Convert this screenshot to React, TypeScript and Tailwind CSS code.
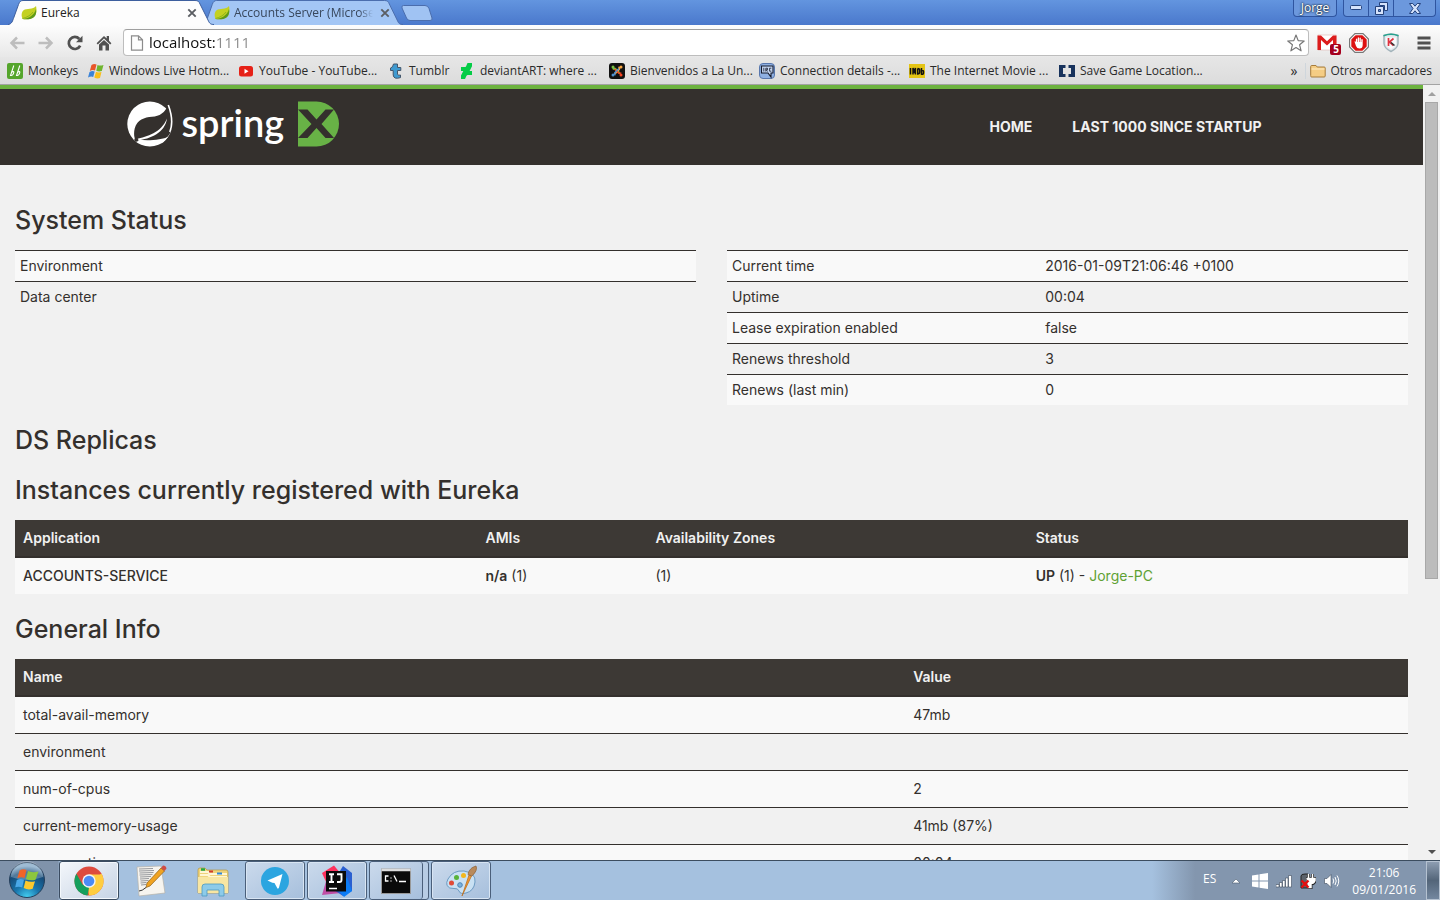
import { useState, type ReactNode } from "react";

const uiFont = "font-['Open_Sans','Noto_Sans',sans-serif]";

function Leaf() {
  return (
    <svg viewBox="0 0 16 16" className="size-4 shrink-0" aria-hidden="true">
      <path d="M15 1c.9 4.200.7 8.600-2.200 11C9.800 14.600 5 14.600 1.600 14 .2 11 .3 7.200 2.600 5.300 5.700 2.800 12 5 15 1z" fill="#c3d122" />
      <path d="M15 4c.6 3.500 0 6.400-2.200 8.200C9.800 14.600 5 14.600 1.600 14 7 13.500 13 11 15 4z" fill="#5f9a1c" />
      <path d="M1.500 13.500C6 12.500 10 10 12 7" stroke="#8fb51c" fill="none" />
    </svg>
  );
}

function TabShape({ fill, stroke }: { fill: string; stroke: string }) {
  return (
    <svg viewBox="0 0 206 25" preserveAspectRatio="none" className="absolute inset-0 size-full" aria-hidden="true">
      <path d="M0 25C4 24 4.500 21 6 17L10.500 4.500C11.500 1.500 13 .5 15 .5H187C190 .5 191 1.500 192 4L200 20C201.500 23.500 202.500 24.500 206 25z" fill={fill} />
      <path d="M0 24.500C4 24 4.500 21 6 17L10.500 4.500C11.500 1.500 13 .5 15 .5H187C190 .5 191 1.500 192 4L200 20C201.500 23.500 202.500 24.500 206 24.500" fill="none" stroke={stroke} />
    </svg>
  );
}

function CloseX() {
  return (
    <svg viewBox="0 0 10 10" className="size-[10px]" aria-hidden="true">
      <path d="M1.300 1.300l7.400 7.400M8.700 1.300L1.300 8.700" stroke="#5b5e63" strokeWidth="1.900" />
    </svg>
  );
}

function TabStrip() {
  return (
    <div className="flex h-[25px] bg-linear-to-b from-[#6395df] to-[#4a78cc] pl-2">
      <div className="relative z-10 flex w-[206px] items-center pr-[17px] pl-[13px]">
        <TabShape fill="#fdfdfd" stroke="#3d5f9e" />
        <button className="relative flex min-w-0 flex-1 items-center gap-1 text-xs text-[#222]">
          <Leaf />
          <span>Eureka</span>
        </button>
        <button aria-label="Close tab" className="relative"><CloseX /></button>
      </div>
      <div className="relative -ml-3 flex w-[201px] items-center pr-[13px] pl-3">
        <TabShape fill="#a3c6f5" stroke="#4a6dad" />
        <button className="relative flex min-w-0 flex-1 items-center gap-1 text-xs text-[#38475c]">
          <Leaf />
          <span className="w-[139px] overflow-hidden mask-r-from-90% text-left whitespace-nowrap">Accounts Server (Microservices)</span>
        </button>
        <button aria-label="Close tab" className="relative"><CloseX /></button>
      </div>
      <button aria-label="New tab" className="mt-[5px] -ml-[2px] h-4">
        <svg viewBox="0 0 32 16" className="h-4 w-8" aria-hidden="true">
          <path d="M2.500.5H24q3 0 4 3l3 9.500q.8 2.500-2 2.500H9q-2.500 0-3.500-2.500L1 3Q.3.500 2.500.5z" fill="#a0c3f3" stroke="#4a6dad" />
        </svg>
      </button>
      <div className="ml-auto flex h-[17px] text-white">
        <button className="mr-[6px] w-11 rounded-b border border-t-0 border-[#2f55a0] bg-[#6c98dd] text-xs leading-4 [text-shadow:0_0_2px_#123,0_0_2px_#123]">Jorge</button>
        <div className="mr-1 flex rounded-b border border-t-0 border-[#2f55a0] bg-[#6c98dd]">
          <button aria-label="Minimize" className="flex w-[25px] items-center justify-center border-r border-[#2f55a0]">
            <svg viewBox="0 0 12 6" className="h-[6px] w-3"><rect x=".5" y=".5" width="11" height="4" rx="1" fill="#d6e3fb" stroke="#24427c" /></svg>
          </button>
          <button aria-label="Restore" className="flex w-[25px] items-center justify-center border-r border-[#2f55a0]">
            <svg viewBox="0 0 13 13" className="size-[13px]">
              <path d="M4.500.5h8v8h-3v-5h-5z" fill="#d6e3fb" stroke="#24427c" />
              <path fillRule="evenodd" d="M.5 4.500h8v8h-8zM3.500 7.500h2v2h-2z" fill="#d6e3fb" stroke="#24427c" />
            </svg>
          </button>
          <button aria-label="Close" className="flex w-[41px] items-center justify-center">
            <svg viewBox="0 0 12 11" className="h-[11px] w-3"><path d="M.5.5h3.300L6 3.200 8.200.5h3.300L8 5.500l3.500 5H8.200L6 7.800l-2.200 2.700H.5L4 5.500z" fill="#d6e3fb" stroke="#24427c" /></svg>
          </button>
        </div>
      </div>
    </div>
  );
}

function Arrow({ flip = false }: { flip?: boolean }) {
  return (
    <svg viewBox="0 0 16 14" className={flip ? "h-[14px] w-4 -scale-x-100" : "h-[14px] w-4"} aria-hidden="true">
      <path d="M8 1.500L2.500 7 8 12.500M3 7h12.500" fill="none" stroke="#bdbdbd" strokeWidth="2.500" />
    </svg>
  );
}

function Toolbar() {
  const [url, setUrl] = useState("localhost:1111");
  return (
    <div className="flex h-8 items-center bg-linear-to-b from-[#fdfdfd] to-[#e8e8e8] px-[9px] pt-[3px]">
      <div className="flex w-[114px] items-center gap-[13px]">
        <button aria-label="Back"><Arrow /></button>
        <button aria-label="Forward"><Arrow flip /></button>
        <button aria-label="Reload">
          <svg viewBox="0 0 16 16" className="size-4" aria-hidden="true">
            <path d="M13.200 10.600A6 6 0 1 1 12.300 4" fill="none" stroke="#505050" strokeWidth="2.700" />
            <path d="M15.500.8v6.400H9z" fill="#505050" />
          </svg>
        </button>
        <button aria-label="Home">
          <svg viewBox="0 0 16 16" className="size-4" aria-hidden="true">
            <path d="M8 1L.6 8.200l1.200 1.200L8 3.600l6.200 5.800 1.200-1.200L13 5.800V1h-2.300v2.600zM3 9.500V15.500h3.500V10.500h3v5H13V9.500L8 4.900z" fill="#505050" />
          </svg>
        </button>
      </div>
      <div className="flex h-[27px] min-w-0 flex-1 items-center rounded-sm border border-[#bdbdbd] border-t-[#9f9f9f] bg-white pr-[3px] pl-[6px]">
        <svg viewBox="0 0 14 16" className="h-4 w-[14px]" aria-hidden="true">
          <path d="M1.500.8h7l4 4v10.400h-11zM8.500.8v4h4" fill="#fdfdfd" stroke="#8c8c8c" strokeWidth="1.200" />
        </svg>
        <input
          aria-label="Address"
          value={url}
          onChange={(e) => setUrl(e.target.value)}
          className="ml-[5px] min-w-0 flex-1 bg-[linear-gradient(to_right,#111_66px,#8a8a8a_66px)] bg-clip-text text-[15px] text-transparent caret-black outline-none"
        />
        <button aria-label="Bookmark this page">
          <svg viewBox="0 0 18 18" className="size-[18px]" aria-hidden="true">
            <path d="M9 1l2.200 5.600 6 .4-4.600 3.800 1.500 6L9 13.500l-5.100 3.300 1.500-6L.8 7l6-.4z" fill="#fff" stroke="#777" strokeWidth="1.200" strokeLinejoin="round" />
          </svg>
        </button>
      </div>
      <div className="flex w-[122px] items-center justify-end">
        <button aria-label="Gmail" className="relative mr-2">
          <svg viewBox="0 0 24 24" className="size-6" aria-hidden="true">
            <rect x="1" y="4" width="18" height="15" fill="#fff" stroke="#d9a6a3" strokeWidth=".5" />
            <path d="M.5 19V4.500H4l6 5.800 6-5.800h3.500V19H16V9l-6 5.500L4 9v10z" fill="#dc1c1c" />
            <rect x="13" y="13" width="11" height="11" rx="2" fill="#a5001e" />
          </svg>
          <span className="absolute right-[2px] bottom-[-1px] text-[10px] leading-[13px] font-bold text-white">5</span>
        </button>
        <button aria-label="AdBlock" className="mr-3">
          <svg viewBox="0 0 20 20" className="size-5" aria-hidden="true">
            <path d="M6 .6h8L19.400 6v8L14 19.400H6L.6 14V6z" fill="#fff" stroke="#777" strokeWidth="1.200" />
            <path d="M6.600 2.300h6.800l4.300 4.300v6.800l-4.300 4.300H6.600l-4.300-4.300V6.600z" fill="#dd1111" />
            <path d="M5.500 8.500q.8-.6 1.400.4V6q.7-1 1.300 0v3h.5V4.700q.7-1 1.300 0V9h.5V5q.7-.9 1.300 0v4h.5V6.500q.8-.8 1.400 0V12q0 3.500-3.200 3.500-2.600 0-3.500-2.500z" fill="#fff" />
          </svg>
        </button>
        <button aria-label="Kaspersky" className="mr-4">
          <svg viewBox="0 0 20 20" className="size-5" aria-hidden="true">
            <path d="M3 2.500q7-3 14 0v8q-.5 5-7 8-6.500-3-7-8z" fill="#e3ebee" stroke="#a3b4bb" strokeWidth="1.500" />
            <path d="M5 4.500h10v6q-.5 3-5 5.500-4.500-2.500-5-5.500z" fill="#f8fafb" />
            <path d="M2.500 2.700q7.500-3 15 0" stroke="#25a48e" strokeWidth="1.500" fill="none" />
            <path d="M7.500 5v8M12.500 5.500l-4 3.500 4 3.500" stroke="#df3340" strokeWidth="1.700" fill="none" />
            <path d="M10 9.500l3.500 3" stroke="#333" strokeWidth="1.500" />
          </svg>
        </button>
        <button aria-label="Menu">
          <svg viewBox="0 0 14 14" className="size-[14px]" aria-hidden="true"><path d="M.5 2h13M.5 7h13M.5 12h13" stroke="#505050" strokeWidth="3" /></svg>
        </button>
      </div>
    </div>
  );
}

const bookmarks: { label: string; width: string; icon: ReactNode }[] = [
  { label: "Monkeys", width: "w-[81px]", icon: (<>
    <rect width="16" height="16" rx="2" fill="#55a52c" />
    <path d="M6.800 2.500L3.500 12.500Q6 13 6.800 9.500 7 8 4.800 9M12.800 2.500L9.500 12.500Q12 13 12.800 9.500 13 8 10.800 9" fill="none" stroke="#fff" strokeWidth="1.100" />
  </>) },
  { label: "Windows Live Hotm...", width: "w-[150px]", icon: (<>
    <path d="M3.500 2Q6 .5 8.500 1.500L7 7.500Q4.500 6.500 1.800 8z" fill="#e8562a" />
    <path d="M9.500 2q2.500 1.200 6 0l-1.700 6q-3 1-5.500-.2z" fill="#6fb52e" />
    <path d="M1.500 9q2.500-1.500 5.200-.5L5.200 14Q3 13 0 14.500z" fill="#3b83d8" />
    <path d="M8 8.800q2.500 1.200 5.500.2L12 15q-3 1-5.700-.6z" fill="#f9bf1c" />
  </>) },
  { label: "YouTube - YouTube...", width: "w-[150px]", icon: (<>
    <rect x="1" y="3" width="14" height="10.500" rx="2.500" fill="#e62117" />
    <path d="M6.500 5.800v5l4-2.500z" fill="#fff" />
  </>) },
  { label: "Tumblr", width: "w-[71px]", icon: (
    <path d="M5.500 1h4v3.500h3.300v3H9.500v3.500q.3 2 3 1v2.600q-6.800 2.200-7.300-2.600V7.500H2.500V5Q5 4.500 5.500 1z" fill="#3f9ad0" stroke="#44566b" />
  ) },
  { label: "deviantART: where ...", width: "w-[150px]", icon: (
    <path d="M8.500 0H13v3.300L10.600 8H13v4H8.500l-1 .8L6 16H2v-3.500L4.300 8H2V4h4.500l.6-.7z" fill="#05cc47" />
  ) },
  { label: "Bienvenidos a La Un...", width: "w-[150px]", icon: (<>
    <rect width="16" height="16" rx="3" fill="#111" />
    <path d="M4 6.500Q5 4.500 7 6.500L10.500 10" stroke="#7ac143" strokeWidth="1.800" fill="none" />
    <path d="M9.500 4Q11.500 5 9.500 7L6 10.500" stroke="#f9a541" strokeWidth="1.800" fill="none" />
    <path d="M12 9.500Q11 11.500 9 9.500L5.500 6" stroke="#f44321" strokeWidth="1.500" fill="none" />
    <path d="M6.500 12Q4.500 11 6.500 9L10 5.500" stroke="#5091cd" strokeWidth="1.500" fill="none" />
    <circle cx="4" cy="4" r="1.500" fill="#7ac143" />
    <circle cx="12" cy="4" r="1.500" fill="#f9a541" />
    <circle cx="12" cy="12" r="1.500" fill="#f44321" />
    <circle cx="4" cy="12" r="1.500" fill="#5091cd" />
  </>) },
  { label: "Connection details -...", width: "w-[150px]", icon: (<>
    <rect x=".5" y=".5" width="15" height="15" rx="3.500" fill="#8fb0e2" stroke="#5877ad" />
    <path d="M2.500 3h11.500v7H12v4L9 10H2.500z" fill="#c5d7f3" stroke="#151a2c" strokeWidth="1.100" />
    <path d="M4.800 4.800v3.700M6.800 8.500V5.200h1.700v1.600H7.200l1.300 1.700M12.300 5.200h-1.700v3h1.700" stroke="#151a2c" fill="none" strokeWidth=".8" />
  </>) },
  { label: "The Internet Movie ...", width: "w-[150px]", icon: (<>
    <rect y="1" width="16" height="14" fill="#e4c414" />
    <path d="M1.500 5v6.500M4 11.500V5l1.200 3.500L6.400 5v6.500M8.700 5.500v5.500q2 0 2-2V7.500q0-2-2-2M12.500 5v6.200q2 .3 2-1.200V8.500q0-1.200-2-1" stroke="#111" fill="none" strokeWidth="1.500" />
  </>) },
  { label: "Save Game Location...", width: "w-[150px]", icon: (
    <path d="M0 2h6.500v3H4v6h2.500v3H0zM16 2H9.500v3H12v6H9.500v3H16z" fill="#17325c" />
  ) },
];

function Bookmarks() {
  return (
    <nav aria-label="Bookmarks" className="flex h-7 items-center border-b border-[#a3a3a3] bg-linear-to-b from-[#e6e6e6] to-[#dcdcdc] pr-2 pl-[7px] text-xs text-[#2a2a2a]">
      {bookmarks.map((b) => (
        <a key={b.label} href="#" className={`flex shrink-0 items-center gap-[5px] whitespace-nowrap ${b.width}`}>
          <svg viewBox="0 0 16 16" className="size-4 shrink-0" aria-hidden="true">{b.icon}</svg>
          {b.label}
        </a>
      ))}
      <button aria-label="More bookmarks" className="mr-2 ml-auto text-sm leading-4">»</button>
      <a href="#" className="flex items-center gap-1 border-l border-[#cfd6dc] pl-1 whitespace-nowrap">
        <svg viewBox="0 0 16 16" className="size-4" aria-hidden="true">
          <path d="M.7 12.500V3.500q0-1 1-1H6l1.200 1.500h7q1 0 1 1v8q0 1-1 1H1.700q-1 0-1-1z" fill="#f5cd84" stroke="#a67c3c" />
          <path d="M1.500 6h13" stroke="#fdecc6" />
        </svg>
        Otros marcadores
      </a>
    </nav>
  );
}

function SpringLogo() {
  return (
    <a href="#" className="flex items-center text-white" aria-label="Spring">
      <svg viewBox="0 0 46 46" className="size-[46px]" aria-hidden="true">
        <circle cx="22.800" cy="23" r="22.500" fill="#fff" />
        <path d="M41.500 2.500C45.500 13 47.500 23 43.500 31.500 40 38.500 34 40.500 27 40.300L9.500 39.500C7 38 6.500 32.500 7.700 27.500 10 18.500 17.500 16.500 25 15.800 32.500 15 38 12.500 41.500 2.500z" fill="#34302d" />
        <path d="M41.300 4C45 14 46 23 42.800 31" fill="none" stroke="#fff" strokeWidth="1.600" />
        <path d="M9.500 38C20 35.500 34 32 40 17.500 38 31.500 24 38 9.500 39.500z" fill="#fff" />
        <path d="M11 38.800C22 40 35 39 41.500 35.500L36 41.500H14z" fill="#fff" />
        <circle cx="9.300" cy="38.800" r="2" fill="#34302d" />
      </svg>
      <span className="w-[125px] pb-1 pl-[9px] font-['Lato',sans-serif] text-[38px] leading-[42px] font-semibold">spring</span>
      <svg viewBox="0 0 42 46" className="h-[46px] w-[42px]" aria-hidden="true">
        <path d="M0 .5h18.500a22.500 22.500 0 0 1 0 45H0z" fill="#68b246" />
        <path d="M0 8.500h9.500l9 10 9-10H36L23.500 23 36 37H27.500l-9-10-9 10H0L13.500 23z" fill="#34302d" />
      </svg>
    </a>
  );
}

function Heading({ children, className = "mt-[22px]" }: { children: ReactNode; className?: string }) {
  return <h1 className={`mb-[17px] font-['Inter',sans-serif] text-[25px] leading-[26px] font-medium text-[#34302d] ${className}`}>{children}</h1>;
}

function StatusTable({ rows }: { rows: [string, string][] }) {
  return (
    <table className="w-full table-fixed border-separate border-spacing-0 self-start">
      <tbody>
        {rows.map(([name, value]) => (
          <tr key={name} className="h-[31px] odd:bg-[#f9f9f9]">
            <th scope="row" className="w-[46%] border-t border-[#34302d] px-[5px] text-left font-normal">{name}</th>
            <td className="border-t border-[#34302d] px-[5px]">{value}</td>
          </tr>
        ))}
      </tbody>
    </table>
  );
}

const instanceColumns = [
  ["Application", "w-[33.200%]"],
  ["AMIs", "w-[12.200%]"],
  ["Availability Zones", "w-[27.300%]"],
  ["Status", ""],
];

const generalInfo = [
  ["total-avail-memory", "47mb"],
  ["environment", ""],
  ["num-of-cpus", "2"],
  ["current-memory-usage", "41mb (87%)"],
  ["server-uptime", "00:04"],
];

function EurekaPage() {
  return (
    <div className="min-w-0 flex-1 overflow-hidden bg-[#f1f1f1] font-['Inter',sans-serif] text-sm text-[#34302d]">
      <header className="h-20 border-t-4 border-[#6db33f] bg-[#34302d]">
        <div className="mx-auto flex max-w-[1170px] items-center justify-between pt-3 pr-[35px]">
          <SpringLogo />
          <nav className="flex gap-10 pt-[6px] font-bold text-[#f1f1f1] uppercase">
            <a href="#">Home</a>
            <a href="#">Last 1000 since startup</a>
          </nav>
        </div>
      </header>
      <main className="px-[15px] pt-5">
        <Heading>System Status</Heading>
        <div className="grid grid-cols-2 gap-[31px]">
          <StatusTable rows={[["Environment", ""], ["Data center", ""]]} />
          <StatusTable
            rows={[
              ["Current time", "2016-01-09T21:06:46 +0100"],
              ["Uptime", "00:04"],
              ["Lease expiration enabled", "false"],
              ["Renews threshold", "3"],
              ["Renews (last min)", "0"],
            ]}
          />
        </div>
        <Heading>DS Replicas</Heading>
        <Heading className="mt-6">Instances currently registered with Eureka</Heading>
        <table className="w-full table-fixed border-separate border-spacing-0">
          <thead>
            <tr className="h-[38px] bg-[#3d3935] text-[#f1f1f1]">
              {instanceColumns.map(([name, width]) => (
                <th key={name} scope="col" className={`border-b-2 border-[#34302d] px-2 text-left font-semibold ${width}`}>{name}</th>
              ))}
            </tr>
          </thead>
          <tbody>
            <tr className="h-9 bg-[#f9f9f9]">
              <td className="px-2 font-medium">ACCOUNTS-SERVICE</td>
              <td className="px-2"><b className="font-semibold">n/a</b> (1)</td>
              <td className="px-2">(1)</td>
              <td className="px-2"><b className="font-semibold">UP</b> (1) - <a href="#" className="text-[#5fa134]">Jorge-PC</a></td>
            </tr>
          </tbody>
        </table>
        <Heading>General Info</Heading>
        <table className="w-full table-fixed border-separate border-spacing-0">
          <thead>
            <tr className="h-[38px] bg-[#3d3935] text-[#f1f1f1]">
              <th scope="col" className="w-[63.900%] border-b-2 border-[#34302d] px-2 text-left font-semibold">Name</th>
              <th scope="col" className="border-b-2 border-[#34302d] px-2 text-left font-semibold">Value</th>
            </tr>
          </thead>
          <tbody>
            {generalInfo.map(([name, value]) => (
              <tr key={name} className="h-[37px] odd:bg-[#f9f9f9]">
                <td className="border-b border-[#34302d] px-2">{name}</td>
                <td className="border-b border-[#34302d] px-2">{value}</td>
              </tr>
            ))}
          </tbody>
        </table>
      </main>
    </div>
  );
}

function ScrollBar() {
  return (
    <div className="flex w-[17px] shrink-0 flex-col bg-[#f1f1f1]">
      <button aria-label="Scroll up" className="flex h-[17px] items-center justify-center">
        <svg viewBox="0 0 8 4" className="h-1 w-2"><path d="M0 4l4-4 4 4z" fill="#a0a0a0" /></svg>
      </button>
      <div className="min-h-0 flex-1 px-[2px]">
        <div className="h-[64.400%] border border-[#a8a8a8] bg-[#bcbcbc]" />
      </div>
      <button aria-label="Scroll down" className="flex h-[17px] items-center justify-center">
        <svg viewBox="0 0 8 4" className="h-1 w-2"><path d="M0 0l4 4 4-4z" fill="#505050" /></svg>
      </button>
    </div>
  );
}

function TaskButton({ label, framed = false, active = false, children }: { label: string; framed?: boolean; active?: boolean; children: ReactNode }) {
  const frame = active
    ? "border-[#3b4c61] bg-linear-to-br from-[#f4f7fb] to-[#c6d3e4] shadow-[inset_0_0_0_1px_#f4f8fc]"
    : framed
      ? "border-[#4a5f7a] bg-linear-to-br from-[#cbdaec] to-[#a6bfdc] shadow-[inset_0_0_0_1px_#d8e5f3]"
      : "border-transparent";
  return (
    <button aria-label={label} className={`flex h-[39px] w-[60px] items-center justify-center rounded-[3px] border ${frame}`}>
      <svg viewBox="0 0 32 32" className="size-8" aria-hidden="true">{children}</svg>
    </button>
  );
}

function Taskbar() {
  return (
    <footer className="flex h-10 shrink-0 items-start border-t border-[#3c4d5f] bg-[linear-gradient(to_right,#8093ab_0,#8093ab_58px,#a5c1df_60px,#a5c1df_80%,#8396ae_83%)]">
      <button aria-label="Start" className="mr-[13px] ml-2">
        <svg viewBox="0 0 38 38" className="size-[38px]" aria-hidden="true">
          <defs>
            <radialGradient id="orb" cx=".5" cy="1" r=".9">
              <stop offset="0" stopColor="#45d2f4" />
              <stop offset=".4" stopColor="#1976ad" />
              <stop offset=".8" stopColor="#174b78" />
              <stop offset="1" stopColor="#7fa6c6" />
            </radialGradient>
          </defs>
          <circle cx="19" cy="19" r="17.500" fill="url(#orb)" stroke="#253f5b" />
          <path d="M3 16a16 16 0 0 1 32 0Q19 22 3 16z" fill="#fff" opacity=".25" />
          <path d="M11.500 9.500q3.500-2 7-.5l-2 8q-3.500-1.500-7.200.2z" fill="#f06428" />
          <path d="M20 10q4 2 10.500.5l-3 8.200q-5 1.500-9.500-.7z" fill="#8cc63e" />
          <path d="M8.800 19q3.700-1.700 7.200-.2l-1.800 7.700q-3.500-1.500-7-.2z" fill="#4aa8e8" />
          <path d="M17.500 19.500q4.500 2 9.500.7l-2.300 7.600q-4.500 1.700-9-.7z" fill="#fdc92e" />
        </svg>
      </button>
      <div className="flex gap-[2px]">
        <TaskButton label="Google Chrome" active>
          <circle cx="16" cy="16" r="14.500" fill="#dd4b3e" />
          <path d="M16 16L28.600 8.700A14.500 14.500 0 0 1 16 30.500l-1-7z" fill="#ffcd40" />
          <path d="M3.400 8.700L9.500 19.500 16 22.500v.3L14.500 30.500A14.500 14.500 0 0 1 3.400 8.700z" fill="#159f5c" />
          <path d="M16 9.500H29l-2 6-5.500 2.500z" fill="#ffcd40" />
          <circle cx="16" cy="16" r="6.700" fill="#f4f4f4" />
          <circle cx="16" cy="16" r="5.300" fill="#4c8bf5" />
        </TaskButton>
        <TaskButton label="Text editor">
          <path d="M2 2l24-1 4 27-26 3z" fill="#f6f4ef" stroke="#b6b1a8" strokeWidth=".7" />
          <path d="M4 4l14-.5M4 6l15-.5M4.500 8l14-.5M4.500 10l13-.5M5 12l11-.5M5 14l9-.5M5.500 16l8-.5M5.500 18l6-.5M6 20l5-.5" stroke="#96989c" />
          <path d="M26 3l3.500 3L15 21l-4 1.500L12 18z" fill="#f0a322" stroke="#8e5f17" strokeWidth=".7" />
          <path d="M26 3l2-2.500q3 0 3.500 3L29.500 6z" fill="#cf4d45" />
          <path d="M11 22.500Q7 26 4 26" stroke="#333" fill="none" />
        </TaskButton>
        <TaskButton label="File explorer">
          <path d="M1 28V5q0-2 2-2h5l2 2h19q2 0 2 2v21z" fill="#efd47c" stroke="#b9983f" strokeWidth=".7" />
          <path d="M3 7h8l2 2h17M3 10h8l2 2h17" stroke="#fff6d4" strokeWidth="2" fill="none" />
          <path d="M4 4.500h4" stroke="#25a744" strokeWidth="2.500" />
          <path d="M12 6.500h4" stroke="#d3392c" strokeWidth="2" />
          <path d="M20 8.500h5" stroke="#2f87d6" strokeWidth="2" />
          <path d="M1 12h30v16H1z" fill="#f8e6a2" />
          <path d="M5 31V22q0-3 3-3h16q3 0 3 3v9h-5v-6H10v6z" fill="#8dcbe9" stroke="#4b99c0" strokeWidth=".8" />
        </TaskButton>
        <TaskButton label="Telegram" framed>
          <circle cx="16" cy="16" r="14" fill="#2ca5e0" />
          <path d="M23.500 9L8.500 15.500l4.800 2.200L15.500 18l.5 1 2.500 4.500q1 .5 1.500-1z" fill="#fff" />
        </TaskButton>
        <TaskButton label="IntelliJ IDEA" framed>
          <path d="M1 8L13 .5l9 11-14 12z" fill="#fe315d" />
          <path d="M1 30L8 6l12 22z" fill="#c04ea5" />
          <path d="M17 9L22 1l9 7v18l-9 5-9-6z" fill="#2a5fd0" />
          <path d="M26 12l5 14-8 6-5-6z" fill="#0c7cf5" />
          <path d="M5 6h20v20.500H5z" fill="#0a0a0a" />
          <path d="M8 9.300h5M10.500 9v8M8 17h5M16 9.300h4.500V15q0 2-2 2H16" stroke="#fff" strokeWidth="1.900" fill="none" />
          <path d="M8 23.500h8" stroke="#fff" strokeWidth="1.500" />
        </TaskButton>
        <div className="w-[60px] rounded-[3px] border border-[#4a5f7a] bg-[#b7cce4] pr-[5px]">
          <button aria-label="Command prompt" className="flex h-[37px] w-full items-center justify-center rounded-[3px] border-r border-[#4a5f7a] bg-linear-to-br from-[#cbdaec] to-[#a6bfdc]">
            <svg viewBox="0 0 32 32" className="size-8" aria-hidden="true">
              <rect x="1.500" y="4" width="29" height="24.500" fill="#0a0a0a" stroke="#989898" />
              <path d="M1.500 5h29" stroke="#dcdcdc" strokeWidth="2.500" />
              <path d="M8.500 11H5.500v5h3M11 12.500v1M11 15.500v1M14 10.500l3 6M19 16.500h7" stroke="#fff" strokeWidth="1.300" fill="none" />
            </svg>
          </button>
        </div>
        <TaskButton label="Paint" framed>
          <path d="M3 14Q8 5 19 6q12 2 11 11-1 9-9 11-6 1.500-7-2-1-3-5-2.500-5 .5-7-3-1-3 1-6.500z" fill="#c9e1f3" stroke="#6b9ac2" />
          <circle cx="6.500" cy="18" r="2.500" fill="#e04a37" />
          <circle cx="11.500" cy="12.500" r="2.500" fill="#58b33a" />
          <circle cx="18.500" cy="10.500" r="2.500" fill="#f2b71e" />
          <circle cx="15" cy="20" r="2.300" fill="#7db3dd" stroke="#4a84b8" />
          <path d="M17 31l7-21 2.500 1z" fill="#f0962e" stroke="#b86a1a" strokeWidth=".7" />
          <path d="M23 9.500Q24 3 31 1q2 4-4 10z" fill="#b98a5b" stroke="#8b6035" strokeWidth=".7" />
        </TaskButton>
      </div>
      <div className="ml-auto flex h-full items-center text-xs text-white">
        <span className="mr-4 pb-1">ES</span>
        <button aria-label="Show hidden icons" className="mr-3">
          <svg viewBox="0 0 8 6" className="h-[6px] w-2"><path d="M0 5l4-4 4 4z" fill="#fff" stroke="#4c5c70" strokeWidth=".6" /></svg>
        </button>
        <div className="mr-3 flex items-center gap-2">
          <svg viewBox="0 0 16 16" className="size-4" aria-hidden="true"><path d="M0 2.500L6.500 1.500v6H0zM7.500 1.300L16 0v7.500H7.500zM0 8.500h6.500v6L0 13.600zM7.500 8.500H16V16l-8.500-1.300z" fill="#fff" /></svg>
          <svg viewBox="0 0 16 16" className="size-4" aria-hidden="true"><path d="M0 11.500h3V14H0zM3.500 9.500h2.500V14H3.500zM6.500 7.500h2.500V14H6.500zM9.500 5h2.500v9H9.500zM12.500 2.500h3V14h-3z" fill="#fff" stroke="#3d4a5c" strokeWidth=".6" /></svg>
          <svg viewBox="0 0 16 16" className="size-4" aria-hidden="true">
            <path d="M1 3q0-2 4-2h3v14H1z" fill="#5c636c" stroke="#222" />
            <path d="M8.500 1v4M12.500 1v4M6 5.500h9v2.500q-1 3-4 3v4H8" stroke="#222" strokeWidth="3" fill="none" />
            <path d="M8.500 1v4M12.500 1v4M6.500 5.500h8.500v2q-1 3-4 3v4H8" stroke="#fff" strokeWidth="1.500" fill="#fff" />
            <path d="M1.500 7.500l7 7M8.500 7.500l-7 7" stroke="#e60d0d" strokeWidth="2.400" />
          </svg>
          <svg viewBox="0 0 16 16" className="size-4" aria-hidden="true">
            <path d="M.5 5.500h2.500L7 1.500v13l-4-4H.5z" fill="#fff" stroke="#3d4a5c" strokeWidth=".6" />
            <path d="M9 5.500q1.500 2.500 0 5M11 4q2.500 4 0 8M13 2.500q3.500 5.500 0 11" stroke="#fff" fill="none" />
          </svg>
        </div>
        <div className="mr-[10px] flex flex-col items-center leading-[17px]">
          <span>21:06</span>
          <span>09/01/2016</span>
        </div>
        <button aria-label="Show desktop" className="h-full w-[14px] border border-[#b5c2d1] bg-linear-to-b from-[#8d9db1] via-[#536579] to-[#73879f]" />
      </div>
    </footer>
  );
}

export default function App() {
  return (
    <div className={`flex h-screen flex-col overflow-hidden ${uiFont}`}>
      <TabStrip />
      <Toolbar />
      <Bookmarks />
      <div className="flex min-h-0 flex-1">
        <EurekaPage />
        <ScrollBar />
      </div>
      <Taskbar />
    </div>
  );
}
